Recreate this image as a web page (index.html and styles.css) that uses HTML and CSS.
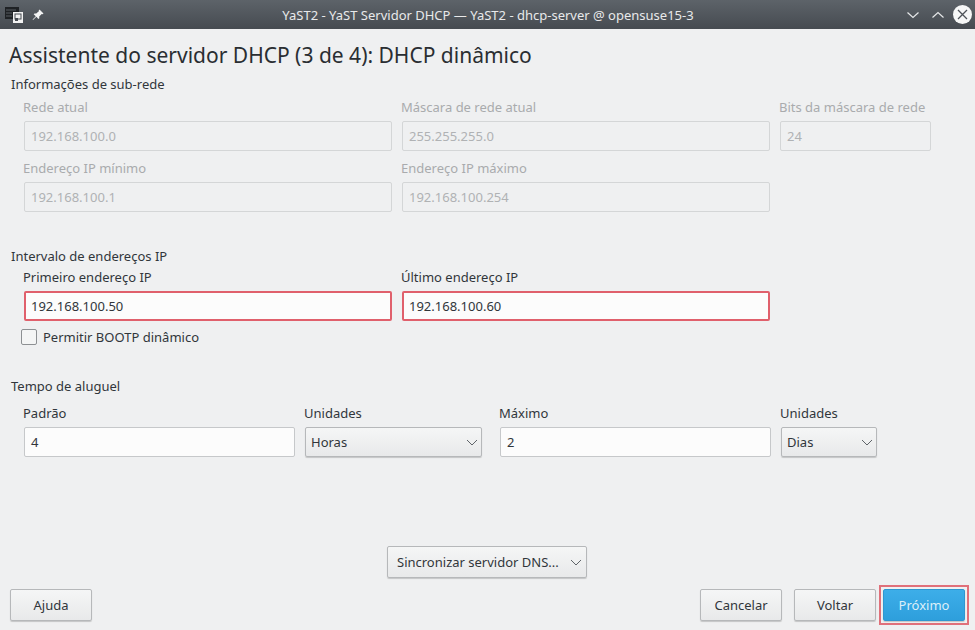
FILE: index.html
```html
<!DOCTYPE html>
<html lang="pt">
<head>
<meta charset="utf-8">
<title>YaST2</title>
<link rel="stylesheet" href="styles.css">
</head>
<body>
<div class="window">
  <header class="titlebar">
    <div class="tb-left">
      <svg class="app-icon" width="18" height="16" viewBox="0 0 18 16">
        <rect x="0" y="0" width="14" height="12" fill="#1f2225"/>
        <path d="M1 3h10M1 6h6M1 9h6" stroke="#45494e" stroke-width="1.500"/>
        <rect x="8" y="5" width="10" height="11" fill="#f2f2f2"/>
        <rect x="10" y="7" width="6" height="5" fill="none" stroke="#454a50"/>
        <rect x="10" y="11" width="3" height="3" fill="#454a50"/>
      </svg>
      <svg class="pin-icon" width="12" height="12" viewBox="0 0 12 12">
        <path d="M7.500 .5l4 4-1 .8-.8-.3L7.200 7.600l.1 1.700-.9.7-2-2.200L1 11l-.4-.4 3.200-3.400L1.700 5.300l.8-.9 1.700.1L6.900 2.200l-.2-.8z" fill="#f4f5f5"/>
      </svg>
    </div>
    <div class="tb-title">YaST2 - YaST Servidor DHCP — YaST2 - dhcp-server @ opensuse15-3</div>
    <div class="tb-right">
      <svg width="14" height="14" viewBox="0 0 14 14"><path d="M1.500 4.500L7 9.500l5.500-5" fill="none" stroke="#e6e8e9" stroke-width="1.200"/></svg>
      <svg width="14" height="14" viewBox="0 0 14 14"><path d="M1.500 9.500L7 4.500l5.500 5" fill="none" stroke="#e6e8e9" stroke-width="1.200"/></svg>
      <span class="close"><svg width="19" height="19" viewBox="0 0 19 19"><path d="M5 5l9 9M14 5l-9 9" stroke="#4d5258" stroke-width="1.300"/></svg></span>
    </div>
  </header>

  <main class="content">
    <h1 class="heading">Assistente do servidor DHCP (3 de 4): DHCP dinâmico</h1>

    <section class="group group-subnet">
      <h2 class="group-title">Informações de sub-rede</h2>
      <div class="grid-three">
        <div class="field"><label class="lbl muted">Rede atual</label><div class="input disabled">192.168.100.0</div></div>
        <div class="field"><label class="lbl muted">Máscara de rede atual</label><div class="input disabled">255.255.255.0</div></div>
        <div class="field"><label class="lbl muted">Bits da máscara de rede</label><div class="input disabled">24</div></div>
        <div class="field"><label class="lbl muted">Endereço IP mínimo</label><div class="input disabled">192.168.100.1</div></div>
        <div class="field"><label class="lbl muted">Endereço IP máximo</label><div class="input disabled">192.168.100.254</div></div>
      </div>
    </section>

    <section class="group group-range">
      <h2 class="group-title">Intervalo de endereços IP</h2>
      <div class="grid-three">
        <div class="field"><label class="lbl">Primeiro endereço IP</label><div class="input marked">192.168.100.50</div></div>
        <div class="field"><label class="lbl">Último endereço IP</label><div class="input marked">192.168.100.60</div></div>
      </div>
      <div class="check-row"><span class="checkbox"></span><span>Permitir BOOTP dinâmico</span></div>
    </section>

    <section class="group group-lease">
      <h2 class="group-title">Tempo de aluguel</h2>
      <div class="grid-lease">
        <div class="field"><label class="lbl">Padrão</label><div class="input">4</div></div>
        <div class="field"><label class="lbl">Unidades</label><div class="select"><span>Horas</span><svg class="chev" width="12" height="7" viewBox="0 0 12 7"><path d="M1 1l5 5 5-5" fill="none" stroke="#5f6469" stroke-width="1"/></svg></div></div>
        <div class="field"><label class="lbl">Máximo</label><div class="input">2</div></div>
        <div class="field"><label class="lbl">Unidades</label><div class="select"><span>Dias</span><svg class="chev" width="12" height="7" viewBox="0 0 12 7"><path d="M1 1l5 5 5-5" fill="none" stroke="#5f6469" stroke-width="1"/></svg></div></div>
      </div>
    </section>

    <div class="bottom">
      <div class="sync-row">
        <div class="select sync"><span>Sincronizar servidor DNS...</span><svg class="chev" width="12" height="7" viewBox="0 0 12 7"><path d="M1 1l5 5 5-5" fill="none" stroke="#5f6469" stroke-width="1"/></svg></div>
      </div>
      <footer class="footer">
        <button class="btn">Ajuda</button>
        <div class="footer-right">
          <button class="btn">Cancelar</button>
          <button class="btn">Voltar</button>
          <button class="btn primary">Próximo</button>
        </div>
      </footer>
    </div>
  </main>
</div>
</body>
</html>
```
FILE: styles.css
```css
* { box-sizing: border-box; }
html, body { margin: 0; padding: 0; }
body {
  width: 975px;
  height: 630px;
  overflow: hidden;
  background: #eff0f1;
  color: #31363b;
  font-family: "Noto Sans", sans-serif;
  font-size: 13px;
}
.window { display: flex; flex-direction: column; height: 630px; }
.titlebar {
  height: 29px;
  flex: none;
  display: flex;
  align-items: center;
  justify-content: space-between;
  padding: 0 3px 0 5px;
  background: linear-gradient(#5d6369, #464b51);
  color: #e8e9ea;
  position: relative;
}
.tb-left { display: flex; align-items: center; gap: 9px; padding-top: 1px; }
.tb-title {
  position: absolute;
  left: 0; right: 0;
  text-align: center;
  font-size: 13px;
  padding-left: 1px;
}
.tb-right { display: flex; align-items: center; gap: 11px; position: relative; }
.close {
  width: 19px; height: 19px;
  margin-left: -3px;
  border-radius: 50%;
  background: #f6f7f7;
  display: flex;
}
.content {
  flex: 1;
  display: flex;
  flex-direction: column;
  padding: 0 10px 9px 10px;
}
.heading {
  margin: 12px 0 0 -1px;
  font-size: 21px;
  line-height: 28px;
  font-weight: 400;
  color: #2a2e32;
}
.group-title {
  margin: 0 0 0 1px;
  font-size: 13px;
  font-weight: 400;
  line-height: 18px;
  color: #31363b;
}
.group-subnet { margin-top: 6px; }
.group-range { margin-top: 35px; }
.group-lease { margin-top: 31px; }
.grid-three {
  display: grid;
  grid-template-columns: 368px 368px 151px;
  column-gap: 10px;
  row-gap: 8px;
  margin: 5px 0 0 14px;
}
.group-range .grid-three { margin-top: 3px; }
.grid-lease {
  display: grid;
  grid-template-columns: 271px 177px 271px 96px;
  margin: 9px 0 0 14px;
}
.grid-lease .field:nth-child(2) { margin-left: 10px; width: 177px; }
.grid-lease .field:nth-child(3) { margin-left: 28px; width: 271px; }
.grid-lease .field:nth-child(4) { margin-left: 38px; width: 96px; }
.field { display: flex; flex-direction: column; min-width: 0; }
.lbl { height: 18px; line-height: 18px; margin-bottom: 5px; margin-left: -1px; }
.muted { color: #a9abad; }
.input {
  height: 30px;
  background: #fcfcfc;
  border: 1px solid #c6c8ca;
  border-radius: 2px;
  padding: 0 6px;
  line-height: 28px;
  color: #31363b;
}
.input.disabled {
  background: #eff0f1;
  color: #b0b2b4;
  border-color: #d4d6d7;
}
.input.marked {
  border: 2px solid #e0606c;
  padding: 0 5px;
  line-height: 26px;
}
.check-row {
  display: flex;
  align-items: center;
  gap: 6px;
  margin: 7px 0 0 11px;
  height: 18px;
}
.checkbox {
  width: 16px; height: 16px;
  border: 1px solid #8d9093;
  border-radius: 2px;
  background: #f4f5f5;
}
.select {
  height: 30px;
  display: flex;
  align-items: center;
  justify-content: space-between;
  padding: 0 3px 0 5px;
  border: 1px solid #b6b8ba;
  border-radius: 2px;
  background: linear-gradient(#f5f6f6, #e8e9ea);
  box-shadow: 0 1px 1px rgba(0,0,0,.18);
}
.chev { flex: none; }
.bottom { margin-top: auto; }
.sync-row { display: flex; justify-content: center; margin-bottom: 11px; padding-right: 1px; }
.select.sync { width: 200px; height: 32px; padding: 0 4px 0 9px; }
.footer { display: flex; justify-content: space-between; }
.footer-right { display: flex; gap: 12px; }
.btn {
  width: 82px;
  height: 32px;
  border: 1px solid #b6b8ba;
  border-radius: 2px;
  background: linear-gradient(#f5f6f6, #e8e9ea);
  box-shadow: 0 1px 1px rgba(0,0,0,.18);
  color: #31363b;
  font: inherit;
  padding: 0;
}
.btn.primary {
  position: relative;
  margin-left: -5px;
  background: linear-gradient(#3daee9, #2e9fdc);
  border-color: #2f97d0;
  color: #dceff9;
}
.btn.primary::after {
  content: "";
  position: absolute;
  inset: -5px;
  border: 2px solid #e0707a;
}
```
